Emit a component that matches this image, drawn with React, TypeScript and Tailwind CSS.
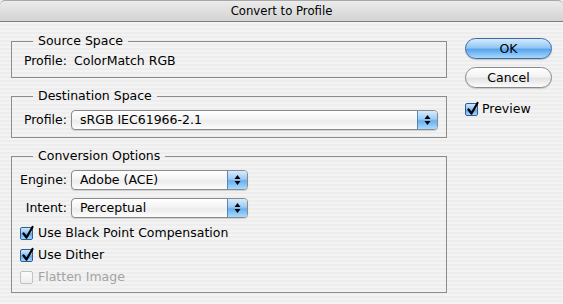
import React from "react";

const font = { fontFamily: '"DejaVu Sans", "Liberation Sans", sans-serif' };

function Arrows() {
  return (
    <svg width="7" height="12" viewBox="0 0 7 12">
      <path d="M3.5 1 L6.5 5 L0.5 5 Z" fill="#000" />
      <path d="M3.5 11 L6.5 7 L0.5 7 Z" fill="#000" />
    </svg>
  );
}

function Popup({ text, className }: { text: string; className: string }) {
  return (
    <div
      className={`flex h-[20px] rounded-[4px] border border-[#8a8a8a] bg-[linear-gradient(to_bottom,#ffffff_0%,#f4f4f4_45%,#ececec_55%,#fdfdfd_100%)] shadow-[0_1px_1px_rgba(0,0,0,0.15)] overflow-hidden ${className}`}
    >
      <div className="flex-1 flex items-center pl-[8px] leading-[16px]">{text}</div>
      <div className="w-[20px] flex items-center justify-center border-l border-[#5b84b8] bg-[linear-gradient(to_bottom,#d6ebfd_0%,#9ccbf5_45%,#68afee_55%,#a9dcff_100%)]">
        <Arrows />
      </div>
    </div>
  );
}

function Check({ checked, disabled }: { checked?: boolean; disabled?: boolean }) {
  if (disabled) {
    return (
      <div className="w-[13px] h-[13px] rounded-[2px] border border-[#c2c2c2] bg-[linear-gradient(to_bottom,#fbfbfb,#eeeeee)]" />
    );
  }
  return (
    <div className="relative w-[13px] h-[13px] rounded-[2px] border border-[#2f5e96] bg-[linear-gradient(to_bottom,#cfe6fc_0%,#8fc3f3_45%,#5ea6eb_55%,#a5d8fd_100%)]">
      {checked && (
        <svg className="absolute left-[0px] top-[-3px]" width="14" height="15" viewBox="0 0 14 15">
          <path d="M2.5 8.5 L5.5 12.5 L11.5 2" stroke="#000" strokeWidth="2.2" fill="none" strokeLinecap="round" strokeLinejoin="round" />
        </svg>
      )}
    </div>
  );
}

function Group({ title, children, className }: { title: string; children: React.ReactNode; className?: string }) {
  return (
    <fieldset className={`border border-[#8c8c8c] pl-[8px] pr-[8px] ${className ?? ""}`}>
      <legend className="ml-[13px] px-[5px] leading-[16px]">{title}</legend>
      {children}
    </fieldset>
  );
}

export default function App() {
  return (
    <div
      style={font}
      className="w-[563px] h-[304px] overflow-hidden text-[12.5px] text-black bg-[repeating-linear-gradient(to_bottom,#ededed_0px,#ededed_2px,#f3f3f3_2px,#f3f3f3_4px)] flex flex-col"
    >
      <div className="h-[22px] shrink-0 rounded-t-[5px] border-t border-[#a8a8a8] border-b border-b-[#7d7d7d] bg-[linear-gradient(to_bottom,#ebebeb,#d3d3d3)] flex items-center justify-center text-[11.7px] leading-[16px]">
        Convert to Profile
      </div>
      <div className="flex flex-1">
        <div className="pl-[11px] pt-[11px] w-[447px] flex flex-col">
          <Group title="Source Space" className="pb-[8px]">
            <div className="flex h-[16px] mt-[4px] leading-[16px]">
              <div className="w-[47px] text-right">Profile:</div>
              <div className="ml-[7px]">ColorMatch RGB</div>
            </div>
          </Group>
          <Group title="Destination Space" className="mt-[10px] pb-[7px]">
            <div className="flex items-center mt-[6px]">
              <div className="w-[47px] text-right leading-[16px]">Profile:</div>
              <Popup text="sRGB IEC61966-2.1" className="ml-[4px] flex-1" />
            </div>
          </Group>
          <Group title="Conversion Options" className="mt-[10px] pb-[4px]">
            <div className="flex items-center mt-[6px]">
              <div className="w-[47px] text-right leading-[16px]">Engine:</div>
              <Popup text="Adobe (ACE)" className="ml-[4px] w-[177px]" />
            </div>
            <div className="flex items-center mt-[8px]">
              <div className="w-[47px] text-right leading-[16px]">Intent:</div>
              <Popup text="Perceptual" className="ml-[4px] w-[177px]" />
            </div>
            <div className="mt-[4px] flex flex-col">
              <div className="h-[22px] flex items-center gap-[5px] leading-[16px]">
                <Check checked />
                <span>Use Black Point Compensation</span>
              </div>
              <div className="h-[22px] flex items-center gap-[5px] leading-[16px]">
                <Check checked />
                <span>Use Dither</span>
              </div>
              <div className="h-[22px] flex items-center gap-[5px] leading-[16px] text-[#a3a3a3]">
                <Check disabled />
                <span>Flatten Image</span>
              </div>
            </div>
          </Group>
        </div>
        <div className="ml-[18px] pt-[16px] w-[87px] flex flex-col">
          <button className="h-[21px] w-[87px] rounded-full border border-[#3e6aa3] bg-[linear-gradient(to_bottom,#d4eafd_0%,#93c7f5_45%,#5ba5ec_55%,#a4d9fd_100%)] shadow-[0_1px_1px_rgba(0,0,0,0.2)] leading-[16px] text-black">
            OK
          </button>
          <button className="mt-[8px] h-[21px] w-[87px] rounded-full border border-[#8a8a8a] bg-[linear-gradient(to_bottom,#ffffff_0%,#f3f3f3_45%,#e3e3e3_55%,#fbfbfb_100%)] shadow-[0_1px_1px_rgba(0,0,0,0.15)] leading-[16px] text-black">
            Cancel
          </button>
          <div className="mt-[13px] h-[16px] flex items-center gap-[4px] leading-[16px]">
            <Check checked />
            <span>Preview</span>
          </div>
        </div>
      </div>
    </div>
  );
}
